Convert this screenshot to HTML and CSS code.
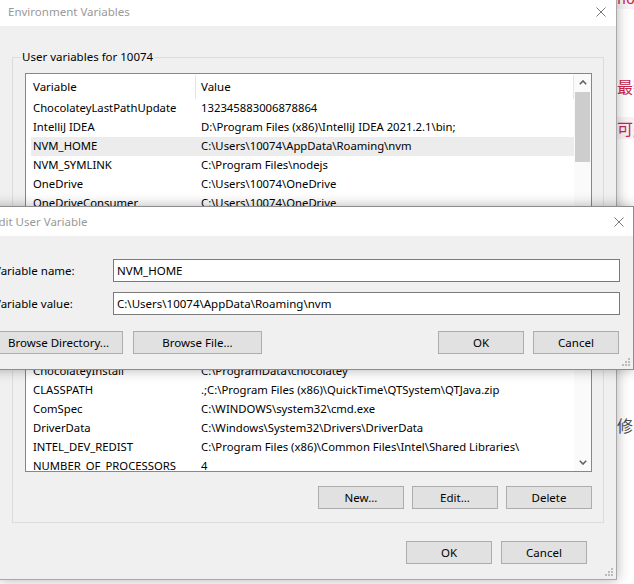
FILE: index.html
```html
<!DOCTYPE html>
<html>
<head>
<meta charset="utf-8">
<link rel="stylesheet" href="styles.css">
</head>
<body>
<div class="backdrop">
  <div class="bg-code">node</div>
  <div class="bg-text bg-new">最新版本</div>
  <div class="bg-text bg-mark">可用版本</div>
  <div class="bg-text bg-gray">修改</div>
</div>

<div class="win env">
  <div class="titlebar">
    <span class="title">Environment Variables</span>
    <svg class="close" width="10" height="10" viewBox="0 0 10 10"><path d="M0.5 0.5L9.5 9.5M9.5 0.5L0.5 9.5" stroke="#7a7a7a" stroke-width="1" fill="none"/></svg>
  </div>
  <div class="envbody">
    <fieldset class="group">
      <legend>User variables for 10074</legend>
      <div class="list list-user">
        <div class="list-main">
          <div class="lhead"><div class="h1">Variable</div><div class="h2">Value</div></div>
          <div class="lrows">
            <div class="row"><div class="c1">ChocolateyLastPathUpdate</div><div class="c2">132345883006878864</div></div>
            <div class="row"><div class="c1">IntelliJ IDEA</div><div class="c2">D:\Program Files (x86)\IntelliJ IDEA 2021.2.1\bin;</div></div>
            <div class="row sel"><div class="c1">NVM_HOME</div><div class="c2">C:\Users\10074\AppData\Roaming\nvm</div></div>
            <div class="row"><div class="c1">NVM_SYMLINK</div><div class="c2">C:\Program Files\nodejs</div></div>
            <div class="row"><div class="c1">OneDrive</div><div class="c2">C:\Users\10074\OneDrive</div></div>
            <div class="row"><div class="c1">OneDriveConsumer</div><div class="c2">C:\Users\10074\OneDrive</div></div>
            <div class="row"><div class="c1">Path</div><div class="c2">C:\Users\10074\AppData\Local\Microsoft\WindowsApps;</div></div>
            <div class="row"><div class="c1">TEMP</div><div class="c2">C:\Users\10074\AppData\Local\Temp</div></div>
            <div class="row"><div class="c1">TMP</div><div class="c2">C:\Users\10074\AppData\Local\Temp</div></div>
          </div>
        </div>
        <div class="sb">
          <div class="sb-btn"><svg width="8" height="5" viewBox="0 0 8 5"><path d="M0.8 4.2L4 1L7.2 4.2" stroke="#606060" stroke-width="1.6" fill="none"/></svg></div>
          <div class="sb-thumb"></div>
          <div class="sb-track"></div>
          <div class="sb-btn"><svg width="8" height="5" viewBox="0 0 8 5"><path d="M0.8 0.8L4 4L7.2 0.8" stroke="#606060" stroke-width="1.6" fill="none"/></svg></div>
        </div>
      </div>
      <div class="btnrow">
        <button class="btn">New...</button>
        <button class="btn">Edit...</button>
        <button class="btn">Delete</button>
      </div>
    </fieldset>

    <fieldset class="group group-sys">
      <legend>System variables</legend>
      <div class="list list-sys">
        <div class="list-main">
          <div class="lhead"><div class="h1">Variable</div><div class="h2">Value</div></div>
          <div class="lrows">
            <div class="row"><div class="c1">ChocolateyInstall</div><div class="c2">C:\ProgramData\chocolatey</div></div>
            <div class="row"><div class="c1">CLASSPATH</div><div class="c2">.;C:\Program Files (x86)\QuickTime\QTSystem\QTJava.zip</div></div>
            <div class="row"><div class="c1">ComSpec</div><div class="c2">C:\WINDOWS\system32\cmd.exe</div></div>
            <div class="row"><div class="c1">DriverData</div><div class="c2">C:\Windows\System32\Drivers\DriverData</div></div>
            <div class="row"><div class="c1">INTEL_DEV_REDIST</div><div class="c2">C:\Program Files (x86)\Common Files\Intel\Shared Libraries\</div></div>
            <div class="row"><div class="c1">NUMBER_OF_PROCESSORS</div><div class="c2">4</div></div>
            <div class="row"><div class="c1">OS</div><div class="c2">Windows_NT</div></div>
          </div>
        </div>
        <div class="sb">
          <div class="sb-btn"><svg width="8" height="5" viewBox="0 0 8 5"><path d="M0.8 4.2L4 1L7.2 4.2" stroke="#606060" stroke-width="1.6" fill="none"/></svg></div>
          <div class="sb-thumb sb-thumb-sys"></div>
          <div class="sb-track"></div>
          <div class="sb-btn"><svg width="8" height="5" viewBox="0 0 8 5"><path d="M0.8 0.8L4 4L7.2 0.8" stroke="#606060" stroke-width="1.6" fill="none"/></svg></div>
        </div>
      </div>
      <div class="btnrow">
        <button class="btn">New...</button>
        <button class="btn">Edit...</button>
        <button class="btn">Delete</button>
      </div>
    </fieldset>

    <div class="btnrow main-btns">
      <button class="btn">OK</button>
      <button class="btn">Cancel</button>
    </div>
  </div>
  <svg class="grip" width="8" height="8" viewBox="0 0 8 8"><g fill="#bcbcbc"><rect x="6" y="0" width="2" height="2"/><rect x="3" y="3" width="2" height="2"/><rect x="6" y="3" width="2" height="2"/><rect x="0" y="6" width="2" height="2"/><rect x="3" y="6" width="2" height="2"/><rect x="6" y="6" width="2" height="2"/></g></svg>
</div>

<div class="win dlg">
  <div class="titlebar dlg-title">
    <span class="title">Edit User Variable</span>
    <svg class="close" width="10" height="10" viewBox="0 0 10 10"><path d="M0.5 0.5L9.5 9.5M9.5 0.5L0.5 9.5" stroke="#7a7a7a" stroke-width="1" fill="none"/></svg>
  </div>
  <div class="dlgbody">
    <div class="field"><label class="flabel">Variable name:</label><div class="input">NVM_HOME</div></div>
    <div class="field field2"><label class="flabel">Variable value:</label><div class="input">C:\Users\10074\AppData\Roaming\nvm</div></div>
    <div class="dlgbtns">
      <button class="btn btn-wide">Browse Directory...</button>
      <button class="btn btn-wide">Browse File...</button>
      <span class="spacer"></span>
      <button class="btn">OK</button>
      <button class="btn">Cancel</button>
    </div>
  </div>
  <svg class="grip" width="8" height="8" viewBox="0 0 8 8"><g fill="#bcbcbc"><rect x="6" y="0" width="2" height="2"/><rect x="3" y="3" width="2" height="2"/><rect x="6" y="3" width="2" height="2"/><rect x="0" y="6" width="2" height="2"/><rect x="3" y="6" width="2" height="2"/><rect x="6" y="6" width="2" height="2"/></g></svg>
</div>
</body>
</html>
```

FILE: styles.css
```css
* { box-sizing: border-box; }
html, body { margin: 0; padding: 0; }
body {
  width: 634px;
  height: 584px;
  overflow: hidden;
  position: relative;
  background: #ffffff;
  font-family: "Noto Sans", "Open Sans", sans-serif;
  font-size: 11px;
  color: #000;
}

/* page behind the windows */
.backdrop {
  position: absolute;
  left: 617px;
  top: 0;
  width: 200px;
  font-family: "Noto Sans CJK SC", "Noto Sans", sans-serif;
  font-size: 16px;
  white-space: nowrap;
}
.bg-code {
  margin-top: -7px;
  height: 16px;
  line-height: 16px;
  font-family: "Liberation Mono", monospace;
  font-size: 15px;
  color: #c7254e;
  background: #f9f2f4;
}
.bg-text { line-height: 22px; }
.bg-new { margin-top: 66px; color: #c7254e; }
.bg-mark { margin-top: 20px; color: #c7254e; background: #f9f2f4; }
.bg-gray { margin-top: 275px; color: #4d4d4d; }

/* windows */
.win {
  position: absolute;
  background: #f0f0f0;
  border: 1px solid #a8a8a8;
  box-shadow: 0 0 12px rgba(0, 0, 0, 0.3);
  display: flex;
  flex-direction: column;
}
.env {
  left: -1px;
  top: -4px;
  width: 618px;
  height: 584px;
}
.titlebar {
  height: 29px;
  flex: 0 0 29px;
  background: #ffffff;
  display: flex;
  align-items: center;
  padding-left: 8px;
}
.title {
  color: #999999;
  font-size: 11.5px;
}
.close { margin-left: auto; margin-right: 10px; }

.envbody {
  padding: 0 12px;
}
.group {
  margin: 23px 0 0;
  padding: 8px 11px 13px 12px;
  border: 1px solid #dcdcdc;
  min-width: 0;
}
.group legend {
  padding: 0 2px;
  margin-left: -5px;
  line-height: 16px;
  height: 16px;
  font-size: 11.5px;
}
.group-sys { margin-top: 1px; padding-top: 5px; }

.list {
  display: flex;
  background: #ffffff;
  border: 1px solid #828790;
  height: 190px;
  overflow: hidden;
}
.list-sys { height: 136px; }
.list-main {
  flex: 1;
  min-width: 0;
  display: flex;
  flex-direction: column;
  overflow: hidden;
}
.lhead {
  display: flex;
  height: 25px;
  flex: 0 0 25px;
  line-height: 23px;
  font-size: 11.5px;
}
.h1 {
  width: 170px;
  padding-left: 7px;
  border-right: 1px solid #e5e5e5;
  margin-top: 1px;
}
.h2 {
  flex: 1;
  padding-left: 5px;
  border-right: 1px solid #e5e5e5;
  margin-top: 1px;
}
.lrows { padding-left: 5px; font-size: 11.3px; }
.row {
  display: flex;
  height: 19px;
  line-height: 18px;
  white-space: nowrap;
}
.row.sel { background: #ececec; }
.c1 { width: 164px; padding-left: 2px; overflow: hidden; }
.c2 { flex: 1; padding-left: 6px; overflow: hidden; }

.sb {
  width: 17px;
  flex: 0 0 17px;
  background: #fafafa;
  display: flex;
  flex-direction: column;
}
.sb-btn {
  height: 17px;
  flex: 0 0 17px;
  display: flex;
  align-items: center;
  justify-content: center;
}
.sb-thumb {
  height: 70px;
  flex: 0 0 70px;
  margin: 1px 1px 0;
  background: #cdcdcd;
}
.sb-thumb-sys { height: 14px; flex-basis: 14px; }
.sb-track { flex: 1; }

.btnrow {
  display: flex;
  justify-content: flex-end;
  gap: 8px;
  margin-top: 14px;
}
.btn {
  width: 86px;
  height: 23px;
  padding: 0;
  background: #e1e1e1;
  border: 1px solid #adadad;
  font-family: "Noto Sans", "Open Sans", sans-serif;
  font-size: 11.5px;
  color: #000;
  line-height: 21px;
}
.main-btns {
  margin-top: 18px;
  margin-right: 17px;
  gap: 9px;
}

.grip {
  position: absolute;
  right: 3px;
  bottom: 3px;
}

/* edit dialog */
.dlg {
  left: -18px;
  top: 206px;
  width: 652px;
  height: 164px;
  border-color: #8c8c8c;
}
.dlg-title { padding-left: 9px; }
.dlg-title .close { margin-right: 9px; }
.dlgbody {
  padding: 23px 13px 0 11px;
  font-size: 11.5px;
}
.field {
  display: flex;
  align-items: center;
}
.field2 { margin-top: 10px; }
.flabel { flex: 0 0 119px; }
.input {
  flex: 1;
  height: 23px;
  background: #ffffff;
  border: 1px solid #7a7a7a;
  padding: 0 3px;
  line-height: 21px;
  white-space: nowrap;
}
.dlgbtns {
  display: flex;
  margin-top: 16px;
  margin-right: 1px;
  gap: 9px;
}
.btn-wide { width: 129px; }
.dlgbtns .btn-wide + .btn-wide { margin-left: 1px; }
.spacer { flex: 1; }
```
